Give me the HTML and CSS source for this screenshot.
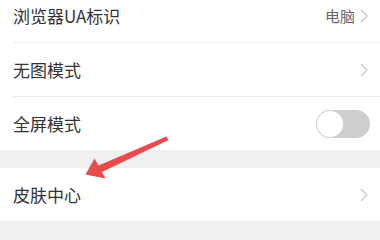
FILE: index.html
```html
<!DOCTYPE html>
<html lang="zh-CN">
<head>
  <meta charset="UTF-8" />
  <meta name="viewport" content="width=device-width, initial-scale=1.0"/>
  <title>设置</title>
  <link rel="stylesheet" href="styles.css">
</head>
<body>
  <div class="page">
    <ul class="group group-first">
      <li class="row">
        <span class="label">浏览器UA标识</span>
        <span class="value">电脑</span>
        <svg class="chevron" viewBox="0 0 8 14"><polyline points="1,1 7,7 1,13" /></svg>
      </li>
      <li class="row">
        <span class="label">无图模式</span>
        <svg class="chevron" viewBox="0 0 8 14"><polyline points="1,1 7,7 1,13" /></svg>
      </li>
      <li class="row">
        <span class="label">全屏模式</span>
        <span class="switch"><span class="knob"></span></span>
      </li>
    </ul>

    <ul class="group">
      <li class="row">
        <span class="label">皮肤中心</span>
        <svg class="chevron" viewBox="0 0 8 14"><polyline points="1,1 7,7 1,13" /></svg>
      </li>
    </ul>

    <!-- annotation arrow drawn over the list -->
    <svg class="pointer" viewBox="0 0 380 240">
      <polygon points="166.5,147.5 168.5,151 102,183 105.5,189.5 85.5,185.5 94.5,169.5 98.5,176.5" />
    </svg>
  </div>
</body>
</html>
```

FILE: styles.css
```css
:root {
  --text: #333;
  --muted: #666;
  --line: #ebebeb;
  --gap: #f0f0f0;
  --white: #fff;
}

* {
  box-sizing: border-box;
  margin: 0;
  padding: 0;
}

html, body {
  height: 100%;
}

body {
  font-family: "Noto Sans CJK SC", "Noto Sans", sans-serif;
  background: var(--gap);
  color: var(--text);
  overflow: hidden;
}

.page {
  position: relative;
  height: 240px;
}

.group {
  list-style: none;
  background: var(--white);
  margin-bottom: 18px;
}

.group-first {
  margin-top: -11px;
}

.row {
  display: flex;
  align-items: center;
  height: 54px;
  margin-left: 13px;
  padding-right: 12px;
  border-bottom: 1px solid var(--line);
}

.row:last-child {
  border-bottom: none;
  height: 53px;
}

.label {
  flex: 1;
  font-size: 17px;
  line-height: 1;
}

.value {
  font-size: 15px;
  line-height: 1;
  color: var(--muted);
  margin-right: 5px;
}

.chevron {
  width: 8px;
  height: 14px;
  fill: none;
  stroke: #c4c4c4;
  stroke-width: 1.2;
}

.switch {
  display: flex;
  align-items: center;
  width: 54px;
  height: 28px;
  margin-right: -2px;
  border-radius: 14px;
  background: #cfcfcf;
  padding: 1px;
}

.knob {
  width: 26px;
  height: 26px;
  border-radius: 50%;
  background: var(--white);
  box-shadow: 0 0 0 1px #d6d6d6;
}

.pointer {
  position: absolute;
  top: 0;
  left: 0;
  width: 380px;
  height: 240px;
  fill: #e94b4d;
  pointer-events: none;
}
```
